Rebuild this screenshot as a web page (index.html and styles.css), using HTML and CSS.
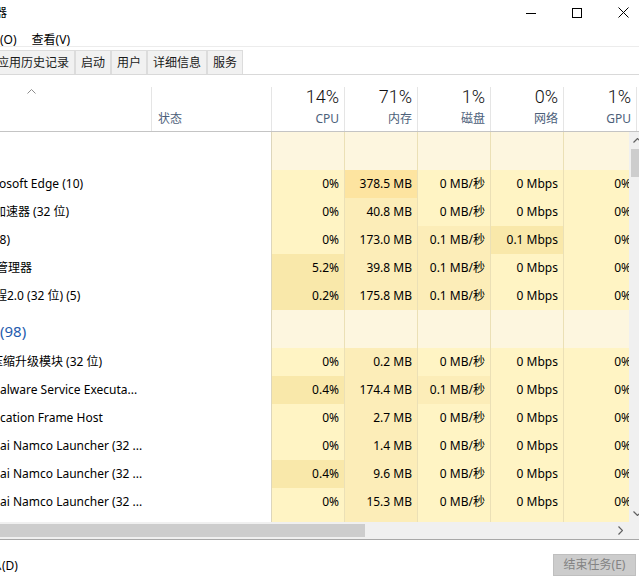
FILE: index.html
```html
<!DOCTYPE html>
<html lang="zh-CN">
<head>
<meta charset="utf-8">
<title>任务管理器</title>
<link rel="stylesheet" href="styles.css">
</head>
<body>
<div class="window">
  <div class="titlebar">
    <span class="title">任务管理器</span>
    <div class="caps">
      <div class="cap"><svg width="10" height="10" viewBox="0 0 10 10"><line x1="0" y1="5.5" x2="10" y2="5.5" stroke="#000" stroke-width="1"/></svg></div>
      <div class="cap"><svg width="10" height="10" viewBox="0 0 10 10"><rect x="0.5" y="0.5" width="9" height="9" fill="none" stroke="#000" stroke-width="1"/></svg></div>
      <div class="cap"><svg width="11" height="11" viewBox="0 0 11 11"><path d="M0.5 0.5 L10.5 10.5 M10.5 0.5 L0.5 10.5" stroke="#000" stroke-width="1" fill="none"/></svg></div>
    </div>
  </div>
  <div class="menubar">
    <span class="menu first">选项(O)</span>
    <span class="menu">查看(V)</span>
  </div>
  <div class="tabs">
    <div class="tab first">应用历史记录</div>
    <div class="tab">启动</div>
    <div class="tab">用户</div>
    <div class="tab">详细信息</div>
    <div class="tab">服务</div>
  </div>
  <div class="thead">
    <div class="th th-name"><svg class="sort" width="9" height="5" viewBox="0 0 9 5"><polyline points="0.5,4.5 4.5,0.5 8.5,4.5" fill="none" stroke="#8c8c8c" stroke-width="1"/></svg></div>
    <div class="th th-status"><span class="lbl">状态</span></div>
    <div class="th th-num"><span class="pct">14%</span><span class="lbl">CPU</span></div>
    <div class="th th-num"><span class="pct">71%</span><span class="lbl">内存</span></div>
    <div class="th th-num"><span class="pct">1%</span><span class="lbl">磁盘</span></div>
    <div class="th th-num"><span class="pct">0%</span><span class="lbl">网络</span></div>
    <div class="th th-num"><span class="pct">1%</span><span class="lbl">GPU</span></div>
    <div class="th-rest"></div>
  </div>
  <div class="tbody">
    <div class="rows">
      <div class="row group">
        <div class="c-name"></div><div class="c-status"></div>
        <div class="c-num gp"></div><div class="c-num gp"></div><div class="c-num gp"></div><div class="c-num gp"></div><div class="c-num gp"></div>
      </div>
      <div class="row">
        <div class="c-name"><span class="nm off1">osoft Edge (10)</span></div><div class="c-status"></div>
        <div class="c-num l0">0%</div><div class="c-num l3">378.5 MB</div><div class="c-num l0">0 MB/秒</div><div class="c-num l0">0 Mbps</div><div class="c-num l0">0%</div>
      </div>
      <div class="row">
        <div class="c-name"><span class="nm off6">加速器 (32 位)</span></div><div class="c-status"></div>
        <div class="c-num l0">0%</div><div class="c-num l1">40.8 MB</div><div class="c-num l0">0 MB/秒</div><div class="c-num l0">0 Mbps</div><div class="c-num l0">0%</div>
      </div>
      <div class="row">
        <div class="c-name"><span class="nm off4">(8)</span></div><div class="c-status"></div>
        <div class="c-num l0">0%</div><div class="c-num l1">173.0 MB</div><div class="c-num l1">0.1 MB/秒</div><div class="c-num l2">0.1 Mbps</div><div class="c-num l0">0%</div>
      </div>
      <div class="row">
        <div class="c-name"><span class="nm off4">管理器</span></div><div class="c-status"></div>
        <div class="c-num l2">5.2%</div><div class="c-num l1">39.8 MB</div><div class="c-num l1">0.1 MB/秒</div><div class="c-num l0">0 Mbps</div><div class="c-num l0">0%</div>
      </div>
      <div class="row">
        <div class="c-name"><span class="nm off5">程2.0 (32 位) (5)</span></div><div class="c-status"></div>
        <div class="c-num l2">0.2%</div><div class="c-num l1">175.8 MB</div><div class="c-num l1">0.1 MB/秒</div><div class="c-num l0">0 Mbps</div><div class="c-num l0">0%</div>
      </div>
      <div class="row group">
        <div class="c-name"><span class="grp">(98)</span></div><div class="c-status"></div>
        <div class="c-num gp"></div><div class="c-num gp"></div><div class="c-num gp"></div><div class="c-num gp"></div><div class="c-num gp"></div>
      </div>
      <div class="row">
        <div class="c-name"><span class="nm off9">压缩升级模块 (32 位)</span></div><div class="c-status"></div>
        <div class="c-num l0">0%</div><div class="c-num l1">0.2 MB</div><div class="c-num l0">0 MB/秒</div><div class="c-num l0">0 Mbps</div><div class="c-num l0">0%</div>
      </div>
      <div class="row">
        <div class="c-name"><span class="nm">alware Service Executa...</span></div><div class="c-status"></div>
        <div class="c-num l2">0.4%</div><div class="c-num l1">174.4 MB</div><div class="c-num l1">0.1 MB/秒</div><div class="c-num l0">0 Mbps</div><div class="c-num l0">0%</div>
      </div>
      <div class="row">
        <div class="c-name"><span class="nm">cation Frame Host</span></div><div class="c-status"></div>
        <div class="c-num l0">0%</div><div class="c-num l1">2.7 MB</div><div class="c-num l0">0 MB/秒</div><div class="c-num l0">0 Mbps</div><div class="c-num l0">0%</div>
      </div>
      <div class="row">
        <div class="c-name"><span class="nm">ai Namco Launcher (32 ...</span></div><div class="c-status"></div>
        <div class="c-num l0">0%</div><div class="c-num l1">1.4 MB</div><div class="c-num l0">0 MB/秒</div><div class="c-num l0">0 Mbps</div><div class="c-num l0">0%</div>
      </div>
      <div class="row">
        <div class="c-name"><span class="nm">ai Namco Launcher (32 ...</span></div><div class="c-status"></div>
        <div class="c-num l2">0.4%</div><div class="c-num l1">9.6 MB</div><div class="c-num l0">0 MB/秒</div><div class="c-num l0">0 Mbps</div><div class="c-num l0">0%</div>
      </div>
      <div class="row">
        <div class="c-name"><span class="nm">ai Namco Launcher (32 ...</span></div><div class="c-status"></div>
        <div class="c-num l0">0%</div><div class="c-num l1">15.3 MB</div><div class="c-num l0">0 MB/秒</div><div class="c-num l0">0 Mbps</div><div class="c-num l0">0%</div>
      </div>
      <div class="row">
        <div class="c-name"></div><div class="c-status"></div>
        <div class="c-num l0"></div><div class="c-num l1"></div><div class="c-num l0"></div><div class="c-num l0"></div><div class="c-num l0"></div>
      </div>
    </div>
    <div class="vscroll">
      <div class="sbtn"><svg width="9" height="5" viewBox="0 0 9 5"><polyline points="0.5,4.5 4.5,0.5 8.5,4.5" fill="none" stroke="#606060" stroke-width="1.2"/></svg></div>
      <div class="vthumb"></div>
      <div class="vspace"></div>
      <div class="sbtn"><svg width="9" height="5" viewBox="0 0 9 5"><polyline points="0.5,0.5 4.5,4.5 8.5,0.5" fill="none" stroke="#606060" stroke-width="1.2"/></svg></div>
    </div>
  </div>
  <div class="hscroll">
    <div class="hthumb"></div>
    <div class="hspace"></div>
    <div class="sbtn"><svg width="5" height="9" viewBox="0 0 5 9"><polyline points="0.5,0.5 4.5,4.5 0.5,8.5" fill="none" stroke="#606060" stroke-width="1.2"/></svg></div>
    <div class="corner"></div>
  </div>
  <div class="footer">
    <span class="fewer">简略信息(D)</span>
    <div class="endtask">结束任务(E)</div>
  </div>
</div>
</body>
</html>
```
FILE: styles.css
```css
* { box-sizing: border-box; }
html, body { margin: 0; padding: 0; }
body {
  width: 639px;
  height: 579px;
  overflow: hidden;
  background: #fff;
  font-family: "Noto Sans", "Noto Sans CJK SC", sans-serif;
  font-size: 12px;
  color: #000;
}
.window {
  width: 646px;
  height: 579px;
  display: flex;
  flex-direction: column;
}

/* title bar */
.titlebar {
  height: 25px;
  display: flex;
  align-items: center;
  justify-content: space-between;
  flex-shrink: 0;
}
.title { margin-left: -53px; line-height: 16px; white-space: nowrap; }
.caps { display: flex; height: 25px; }
.cap {
  width: 46px;
  height: 25px;
  display: flex;
  align-items: center;
  justify-content: center;
}

/* menu */
.menubar {
  height: 22px;
  padding-top: 5px;
  display: flex;
  gap: 15px;
  border-bottom: 1px solid #ececec;
  flex-shrink: 0;
}
.menu { line-height: 17px; white-space: nowrap; padding-top: 1px; }
.menu.first { margin-left: -24px; }

/* tabs */
.tabs {
  margin-top: 3px;
  height: 25px;
  display: flex;
  border-bottom: 1px solid #d9d9d9;
  flex-shrink: 0;
}
.tab {
  height: 24px;
  padding: 1px 5px 0;
  line-height: 22px;
  background: #f1f1f1;
  border: 1px solid #dcdcdc;
  border-bottom: none;
  white-space: nowrap;
  color: #1a1a1a;
}
.tab.first { margin-left: -9px; }

/* header */
.thead {
  height: 57px;
  padding-top: 12px;
  display: flex;
  border-bottom: 1px solid #c4c4c4;
  flex-shrink: 0;
}
.th { height: 44px; border-right: 1px solid #e5e5e5; }
.th-name { width: 152px; padding: 2px 0 0 27px; }
.sort { display: block; }
.th-status {
  width: 120px;
  display: flex;
  align-items: flex-end;
  padding: 0 0 4px 6px;
}
.th-num {
  width: 73px;
  display: flex;
  flex-direction: column;
  align-items: flex-end;
  padding-right: 5px;
}
.th-rest { flex: 1; }
.pct {
  font-family: "Roboto", "Noto Sans", sans-serif;
  font-weight: 300;
  font-size: 18px;
  line-height: 20px;
  color: #111;
}
.lbl {
  margin-top: 4px;
  line-height: 16px;
  color: #4c607a;
  white-space: nowrap;
}

/* body */
.tbody { height: 390px; display: flex; flex-shrink: 0; }
.rows { width: 629px; overflow: hidden; }
.row { display: flex; height: 28px; width: 637px; }
.row.group { height: 38px; }
.c-name {
  width: 152px;
  display: flex;
  align-items: center;
  white-space: nowrap;
  overflow: visible;
}
.nm { line-height: 28px; }
.grp {
  align-self: flex-end;
  padding-bottom: 7px;
  font-size: 15px;
  line-height: 20px;
  color: #1f5cae;
}
.off1 { margin-left: -1px; }
.off4 { margin-left: -4px; }
.off5 { margin-left: -5px; }
.off6 { margin-left: -6px; }
.off9 { margin-left: -9px; }
.c-status { width: 120px; border-right: 1px solid #ddd6bc; }
.c-num {
  width: 73px;
  border-right: 1px solid #ebe0b6;
  text-align: right;
  padding-right: 5px;
  line-height: 28px;
  white-space: nowrap;
}
.gp { background: #fdf6df; }
.l0 { background: #fff4c4; }
.l1 { background: #fcedb8; }
.l2 { background: #f9e8aa; }
.l3 { background: #fde4a0; }

/* scrollbars */
.vscroll {
  width: 17px;
  background: #f0f0f0;
  display: flex;
  flex-direction: column;
}
.sbtn {
  width: 17px;
  height: 17px;
  display: flex;
  align-items: center;
  justify-content: center;
  flex-shrink: 0;
}
.vthumb { height: 28px; margin: 0 2px; background: #cdcdcd; }
.vspace { flex: 1; }
.hscroll {
  height: 17px;
  display: flex;
  background: #f0f0f0;
  flex-shrink: 0;
}
.hthumb { width: 365px; height: 13px; margin-top: 2px; background: #cdcdcd; }
.hspace { flex: 1; }
.corner { width: 17px; background: #f0f0f0; }

/* footer */
.footer {
  flex: 1;
  border-top: 1px solid #a8a8a8;
  display: flex;
  justify-content: space-between;
  align-items: flex-start;
  padding: 14px 10px 0 0;
}
.fewer { margin-left: -46px; line-height: 22px; padding-top: 1px; white-space: nowrap; }
.endtask {
  width: 83px;
  height: 22px;
  line-height: 20px;
  text-align: center;
  background: #cccccc;
  border: 1px solid #bfbfbf;
  color: #838383;
  white-space: nowrap;
}
```
